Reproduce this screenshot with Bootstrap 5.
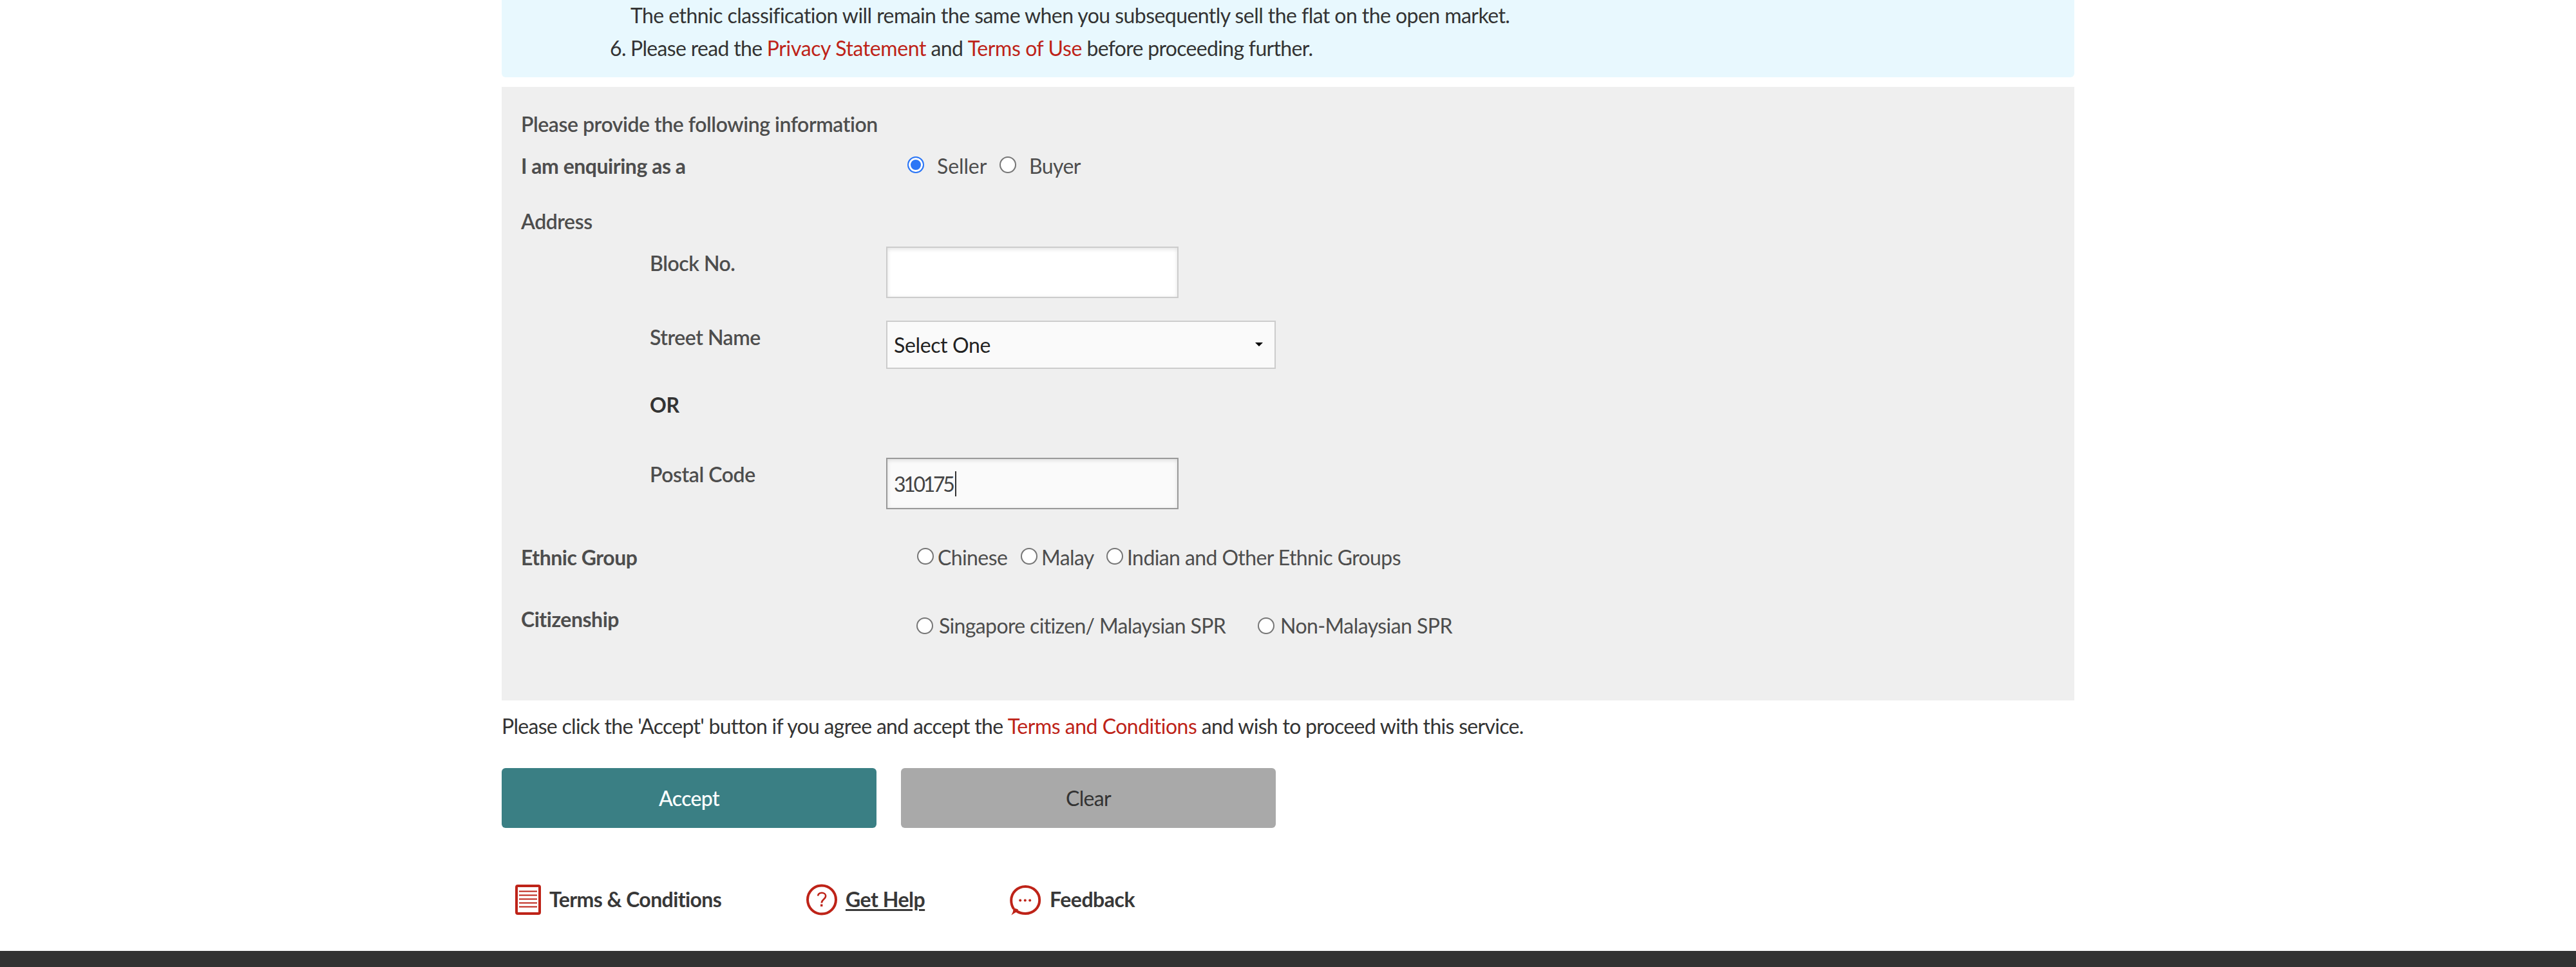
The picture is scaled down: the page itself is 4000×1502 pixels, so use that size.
<!DOCTYPE html>
<html lang="en">
<head>
<meta charset="utf-8">
<title>Ethnic Integration Policy Enquiry</title>
<link rel="stylesheet" href="https://cdn.jsdelivr.net/npm/bootstrap@5.3.0/dist/css/bootstrap.min.css">
<style>
body{font-family:Lato,sans-serif;font-size:32px;line-height:51px;letter-spacing:-.6px;color:#333;background:#fff;height:1502px;overflow:hidden}
a{color:#be2318;text-decoration:none;letter-spacing:-.4px}
.page{width:2442px;margin-left:779px}
.notice{height:120px;background:#e8f8fe;border-radius:0 0 6px 6px}
.notice-list{margin:-2px 0 0;padding-left:200px;list-style:none}
.notice-list .num{display:inline-block;width:32px;margin-left:-32px}
.l1{letter-spacing:-.56px}
.l2{letter-spacing:-.68px}
.panel{margin-top:15px;height:953px;background:#efefef;color:#4d4d4d;padding:32px 30px 0}
.panel label{white-space:nowrap}
.semi{font-weight:600;letter-spacing:-.46px}
.bold{font-weight:700;letter-spacing:-.48px}
.name{width:600px}
.sub{margin-left:200px;width:367px}
.h65{height:65px}.h86{height:86px}.h96{height:96px}.h105{height:105px}.h108{height:108px}.h115{height:115px}.h129{height:129px}
.form-check-input.dot{flex:none;float:none;width:26px;height:26px;margin:11px 0 0;border:2px solid #767676;background:#fff}
.form-check-input.dot:checked{background:#2b76f6;border-color:#2b76f6;box-shadow:inset 0 0 0 3px #fff}
.w143{width:143px}.w161{width:161px}.w133{width:133px}.w530{width:530px}
.wide label{margin-left:20px}
.wide label[for=r1]{letter-spacing:-.1px}
.ethnic{margin-left:15px}.ethnic label{margin-left:6px}
.citizen{margin:10px 0 0 14px}.citizen label{margin-left:9px;letter-spacing:-.64px}
.citizen label[for=c2]{letter-spacing:-.55px}
.citizen .form-check-input.dot{margin-top:13px}
.box.form-control,.box.form-select{width:454px;height:80px;margin-top:0;border:2px solid #ccc;border-radius:0;padding:4px 10px 0;font-size:32px;line-height:51px;letter-spacing:inherit;color:#444;background-color:#fff;box-shadow:inset 0 2px 6px rgba(0,0,0,.12)}
.box.form-select{width:605px;height:75px;padding:0 10px;letter-spacing:-.36px;color:#222;background:#fafafa url("data:image/svg+xml,%3Csvg xmlns='http://www.w3.org/2000/svg' viewBox='0 0 12 6'%3E%3Cpath d='M0 0h12L6 6z'/%3E%3C/svg%3E") no-repeat right 18px top 32px/12px 6px;box-shadow:none}
.box.form-control.typing{background:#fafafa;border-color:#999;padding:13px 10px 0}
.digits{letter-spacing:-3.3px}
.caret{width:2px;height:39px;background:#333;margin:6px 0 0 3px}
.or{color:#333}
.agree{margin:14px 0 40px;height:51px;letter-spacing:-.7px}
.agree a{letter-spacing:-.5px}
.acts{gap:38px}
.act{width:582px;height:93px;border:0;border-radius:6px;font:500 32px/91px Lato,sans-serif;letter-spacing:-.65px;padding:0}
.act-go{background:#3a7f84!important;color:#fff!important}
.act-clear{background:#a9a9a9!important;color:#333!important;font-weight:400}
.help-links{margin:85px 0 0 21px;height:51px;color:#383838}
.help-links svg{flex:none;margin-top:2px}
.i1{width:452px;letter-spacing:-.6px}.i2{width:316px}
.ul{text-decoration:underline;text-decoration-thickness:3px;text-underline-offset:3px}
.base{margin-top:55px;height:25px;background:#323232}
</style>
<script src="https://cdn.jsdelivr.net/npm/bootstrap@5.3.0/dist/js/bootstrap.bundle.min.js"></script>
</head>
<body>
<main class="page">
  <section class="notice overflow-hidden">
    <ul class="notice-list">
      <li class="l1">The ethnic classification will remain the same when you subsequently sell the flat on the open market.</li>
      <li class="l2"><span class="num">6.</span>Please read the <a href="#">Privacy Statement</a> and <a href="#">Terms of Use</a> before proceeding further.</li>
    </ul>
  </section>
  <form class="panel">
    <div class="h65 semi">Please provide the following information</div>
    <div class="d-flex h86">
      <div class="name bold">I am enquiring as a</div>
      <div class="d-flex wide">
        <div class="d-flex w143"><input class="form-check-input dot" type="radio" name="role" id="r1" checked><label for="r1">Seller</label></div>
        <div class="d-flex"><input class="form-check-input dot" type="radio" name="role" id="r2"><label for="r2">Buyer</label></div>
      </div>
    </div>
    <div class="h65 semi">Address</div>
    <div class="d-flex h115"><label class="sub semi" for="blk">Block No.</label><input class="form-control box" id="blk" type="text"></div>
    <div class="d-flex h105"><label class="sub semi" for="street">Street Name</label><select class="form-select box" id="street"><option>Select One</option></select></div>
    <div class="h108"><div class="sub bold or">OR</div></div>
    <div class="d-flex h129"><div class="sub semi">Postal Code</div><div class="form-control box typing d-flex"><span class="digits">310175</span><span class="caret"></span></div></div>
    <div class="d-flex h96">
      <div class="name bold">Ethnic Group</div>
      <div class="d-flex ethnic">
        <div class="d-flex w161"><input class="form-check-input dot" type="radio" name="eth" id="e1"><label for="e1">Chinese</label></div>
        <div class="d-flex w133"><input class="form-check-input dot" type="radio" name="eth" id="e2"><label for="e2">Malay</label></div>
        <div class="d-flex"><input class="form-check-input dot" type="radio" name="eth" id="e3"><label for="e3">Indian and Other Ethnic Groups</label></div>
      </div>
    </div>
    <div class="d-flex">
      <div class="name bold">Citizenship</div>
      <div class="d-flex citizen">
        <div class="d-flex w530"><input class="form-check-input dot" type="radio" name="cit" id="c1"><label for="c1">Singapore citizen/ Malaysian SPR</label></div>
        <div class="d-flex"><input class="form-check-input dot" type="radio" name="cit" id="c2"><label for="c2">Non-Malaysian SPR</label></div>
      </div>
    </div>
  </form>
  <p class="agree">Please click the 'Accept' button if you agree and accept the <a href="#">Terms and Conditions</a> and wish to proceed with this service.</p>
  <div class="d-flex acts">
    <button class="btn act act-go" type="button">Accept</button>
    <button class="btn act act-clear" type="button">Clear</button>
  </div>
  <nav class="d-flex help-links bold">
    <div class="d-flex i1">
      <svg width="53" height="50" viewBox="0 0 53 50" fill="none" stroke="#be2318"><rect x="2" y="3" width="36" height="43" rx="2" stroke-width="4"/><path d="M6 11.500h28M6 17.500h28M6 23.500h28M6 29.500h28M6 35.500h28" stroke-width="2"/></svg>
      <span>Terms &amp; Conditions</span>
    </div>
    <div class="d-flex i2">
      <svg width="61" height="50" viewBox="0 0 61 50" fill="none" stroke="#be2318"><circle cx="24" cy="24.500" r="22" stroke-width="4"/><path d="M18 18.500c.5-3 3-4.700 6-4.700 3.500 0 6.200 2 6.200 5 0 4.700-6.400 5.200-6.400 10.700" stroke-width="2.600"/><path d="M23.700 31.500v3.500" stroke-width="3.400"/></svg>
      <span class="ul">Get Help</span>
    </div>
    <div class="d-flex">
      <svg width="62" height="50" viewBox="0 0 62 50"><path d="M6 38.500C3.600 35 2.200 30.500 2.200 25.500 2.200 13.500 12 4 24.200 4S46.200 13 46.200 25 36.500 46 24.200 46c-5.200 0-10-1.400-13.700-4" fill="none" stroke="#be2318" stroke-width="4"/><path d="M4 36.500C6.500 40 5 44 2.300 48.500c3.400-1.800 5.200-4 8.700-4.700l2-4.300z" fill="#be2318"/><g fill="#be2318"><circle cx="16.200" cy="25.500" r="2"/><circle cx="23.800" cy="25.500" r="2"/><circle cx="31.200" cy="25.500" r="2"/></g></svg>
      <span>Feedback</span>
    </div>
  </nav>
</main>
<footer class="base"></footer>
</body>
</html>
